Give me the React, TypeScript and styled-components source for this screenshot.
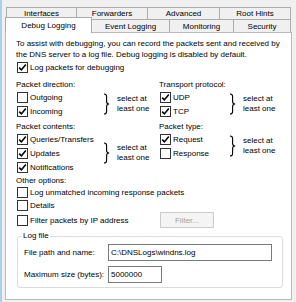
import React from 'react';
import styled, { createGlobalStyle } from 'styled-components';

const GlobalStyle = createGlobalStyle`
  html, body {
    margin: 0;
    padding: 0;
    background: #f0f0f0;
  }
`;

const Dialog = styled.div`
  width: 296px;
  height: 302px;
  box-sizing: border-box;
  border-left: 2px solid #a6d2f0;
  background: #f0f0f0;
  padding-top: 7px;
  font-family: 'Liberation Sans', Arial, sans-serif;
  font-size: 8px;
  color: #000;
  overflow: hidden;
`;

/* tab strip: two rows like the old win32 multi-row tab control */
const TabRow = styled.div<{ $offset: number; $h: number }>`
  display: flex;
  align-items: flex-start;
  height: ${(p) => p.$h}px;
  margin-left: ${(p) => p.$offset}px;
`;

const Tab = styled.div<{ $w: number; $h: number; $active?: boolean }>`
  width: ${(p) => p.$w}px;
  height: ${(p) => p.$h}px;
  box-sizing: border-box;
  margin-left: -1px;
  border: 1px solid #acacac;
  border-bottom: none;
  background: #f0f0f0;
  display: flex;
  align-items: center;
  justify-content: center;
  white-space: nowrap;

  &:first-child {
    margin-left: 0;
  }

  ${(p) =>
    p.$active &&
    `
    position: relative;
    z-index: 2;
    margin-top: -2px;
    background: #fff;
  `}
`;

const Panel = styled.div`
  margin-left: 3px;
  width: 287px;
  height: 268px;
  box-sizing: border-box;
  background: #fff;
  border: 1px solid #b9b9b9;
  padding: 5px 10px 0 10px;
`;

const Intro = styled.p`
  margin: 0;
  line-height: 11px;
`;

const CheckRow = styled.label<{ $h?: number; $indent?: number }>`
  display: flex;
  align-items: center;
  gap: 2px;
  height: ${(p) => p.$h ?? 14}px;
  padding-left: ${(p) => p.$indent ?? 1}px;
  white-space: nowrap;
`;

const Box = styled.span`
  width: 11px;
  height: 11px;
  box-sizing: border-box;
  border: 1px solid #333;
  background: #fff;
  display: flex;
  align-items: center;
  justify-content: center;
  flex-shrink: 0;
`;

const GroupLabel = styled.div<{ $mt?: number }>`
  height: 10px;
  line-height: 10px;
  margin-top: ${(p) => p.$mt ?? 0}px;
`;

const Sections = styled.div<{ $mt: number }>`
  display: grid;
  grid-template-columns: 143px 1fr;
  margin-top: ${(p) => p.$mt}px;
`;

const Block = styled.div`
  display: flex;
  align-items: center;
`;

const CheckList = styled.div<{ $w: number }>`
  width: ${(p) => p.$w}px;
  display: flex;
  flex-direction: column;
`;

const Note = styled.div`
  margin-left: 7px;
  line-height: 10px;
`;

const FilterRow = styled.div`
  display: grid;
  grid-template-columns: 144px 1fr;
  align-items: center;
  height: 13px;
`;

const FilterButton = styled.button`
  width: 54px;
  height: 16px;
  box-sizing: border-box;
  border: 1px solid #cbcbcb;
  background: #f4f4f4;
  color: #a3a3a3;
  font: inherit;
  padding: 0;
`;

const LogFileBox = styled.fieldset`
  margin: 6px 0 0 1px;
  width: 266px;
  box-sizing: border-box;
  border: 1px solid #dcdcdc;
  border-radius: 3px;
  padding: 3px 6px 4px 6px;
`;

const Legend = styled.legend`
  margin-left: -2px;
  padding: 0 1px;
  line-height: 10px;
`;

const FieldGrid = styled.div`
  display: grid;
  grid-template-columns: 84px auto;
  row-gap: 5px;
  align-items: center;
`;

const TextInput = styled.input<{ $w: number }>`
  width: ${(p) => p.$w}px;
  height: 17px;
  box-sizing: border-box;
  border: 1px solid #7a7a7a;
  padding: 0 2px;
  font: inherit;
  color: #000;
  outline: none;
`;

const Tick = () => (
  <svg width="9" height="9" viewBox="0 0 9 9">
    <path d="M1.2 4.6 L3.4 6.9 L7.8 1.6" fill="none" stroke="#000" strokeWidth="1.6" />
  </svg>
);

const Brace = () => (
  <svg width="7" height="22" viewBox="0 0 7 22">
    <path
      d="M1 1 Q3.6 1 3.6 3.6 L3.6 8.4 Q3.6 11 6.2 11 Q3.6 11 3.6 13.6 L3.6 18.4 Q3.6 21 1 21"
      fill="none"
      stroke="#000"
      strokeWidth="1.1"
    />
  </svg>
);

interface CheckProps {
  label: string;
  checked?: boolean;
  h?: number;
}

const Check: React.FC<CheckProps> = ({ label, checked, h }) => (
  <CheckRow $h={h}>
    <Box>{checked && <Tick />}</Box>
    {label}
  </CheckRow>
);

interface OptionGroupProps {
  title: string;
  listWidth: number;
  items: [string, boolean][];
}

const OptionGroup: React.FC<OptionGroupProps> = ({ title, listWidth, items }) => (
  <div>
    <GroupLabel>{title}</GroupLabel>
    <Block>
      <CheckList $w={listWidth}>
        {items.map(([label, on]) => (
          <Check key={label} label={label} checked={on} />
        ))}
      </CheckList>
      <Brace />
      <Note>
        select at
        <br />
        least one
      </Note>
    </Block>
  </div>
);

const topTabs = [
  { label: 'Interfaces', w: 71 },
  { label: 'Forwarders', w: 72 },
  { label: 'Advanced', w: 73 },
  { label: 'Root Hints', w: 72 },
];

const bottomTabs = [
  { label: 'Debug Logging', w: 87, active: true },
  { label: 'Event Logging', w: 79 },
  { label: 'Monitoring', w: 65 },
  { label: 'Security', w: 58 },
];

export default function App() {
  return (
    <>
      <GlobalStyle />
      <Dialog>
        <TabRow $offset={4} $h={12}>
          {topTabs.map((t) => (
            <Tab key={t.label} $w={t.w} $h={12}>
              {t.label}
            </Tab>
          ))}
        </TabRow>
        <TabRow $offset={3} $h={13}>
          {bottomTabs.map((t) => (
            <Tab key={t.label} $w={t.w} $h={t.active ? 16 : 13} $active={t.active}>
              {t.label}
            </Tab>
          ))}
        </TabRow>

        <Panel>
          <Intro>
            To assist with debugging, you can record the packets sent and received by
            <br />
            the DNS server to a log file. Debug logging is disabled by default.
          </Intro>
          <Check label="Log packets for debugging" checked />

          <Sections $mt={6}>
            <OptionGroup
              title="Packet direction:"
              listWidth={87}
              items={[
                ['Outgoing', false],
                ['Incoming', true],
              ]}
            />
            <OptionGroup
              title="Transport protocol:"
              listWidth={70}
              items={[
                ['UDP', true],
                ['TCP', true],
              ]}
            />
          </Sections>

          <Sections $mt={4}>
            <OptionGroup
              title="Packet contents:"
              listWidth={87}
              items={[
                ['Queries/Transfers', true],
                ['Updates', true],
                ['Notifications', true],
              ]}
            />
            <OptionGroup
              title="Packet type:"
              listWidth={70}
              items={[
                ['Request', true],
                ['Response', false],
              ]}
            />
          </Sections>

          <GroupLabel $mt={2}>Other options:</GroupLabel>
          <Check label="Log unmatched incoming response packets" h={13} />
          <Check label="Details" h={13} />
          <FilterRow>
            <Check label="Filter packets by IP address" h={13} />
            <FilterButton disabled>Filter...</FilterButton>
          </FilterRow>

          <LogFileBox>
            <Legend>Log file</Legend>
            <FieldGrid>
              <span>File path and name:</span>
              <TextInput $w={164} defaultValue="C:\DNSLogs\windns.log" />
              <span>Maximum size (bytes):</span>
              <TextInput $w={54} defaultValue="5000000" />
            </FieldGrid>
          </LogFileBox>
        </Panel>
      </Dialog>
    </>
  );
}
